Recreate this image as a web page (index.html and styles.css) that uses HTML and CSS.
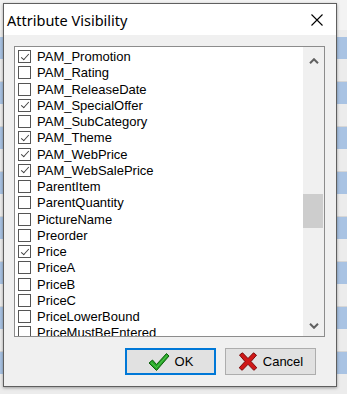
FILE: index.html
```html
<!DOCTYPE html>
<html>
<head>
  <title>Attribute Visibility</title>
  <link rel="stylesheet" href="styles.css">
</head>
<body>
  <div class="dialog">
    <div class="titlebar">
      <span class="title">Attribute Visibility</span>
      <svg class="close" width="12" height="12" viewBox="0 0 12 12">
        <path d="M0.5 0.5 L11.5 11.5 M11.5 0.5 L0.5 11.5" stroke="#000" stroke-width="1.1" fill="none"/>
      </svg>
    </div>
    <div class="content">
      <div class="listbox">
        <div class="items">
          <div class="scroller">
            <div class="item"><span class="box"></span></div>
            <div class="item"><span class="box checked"></span>PAM_Promotion</div>
            <div class="item"><span class="box"></span>PAM_Rating</div>
            <div class="item"><span class="box"></span>PAM_ReleaseDate</div>
            <div class="item"><span class="box checked"></span>PAM_SpecialOffer</div>
            <div class="item"><span class="box"></span>PAM_SubCategory</div>
            <div class="item"><span class="box checked"></span>PAM_Theme</div>
            <div class="item"><span class="box checked"></span>PAM_WebPrice</div>
            <div class="item"><span class="box checked"></span>PAM_WebSalePrice</div>
            <div class="item"><span class="box"></span>ParentItem</div>
            <div class="item"><span class="box"></span>ParentQuantity</div>
            <div class="item"><span class="box"></span>PictureName</div>
            <div class="item"><span class="box"></span>Preorder</div>
            <div class="item"><span class="box checked"></span>Price</div>
            <div class="item"><span class="box"></span>PriceA</div>
            <div class="item"><span class="box"></span>PriceB</div>
            <div class="item"><span class="box"></span>PriceC</div>
            <div class="item"><span class="box"></span>PriceLowerBound</div>
            <div class="item"><span class="box"></span>PriceMustBeEntered</div>
          </div>
        </div>
        <div class="scrollbar">
          <div class="arrow up">
            <svg width="10" height="6" viewBox="0 0 10 6"><path d="M1 5.2 L5 1.2 L9 5.2" stroke="#606060" stroke-width="2" fill="none"/></svg>
          </div>
          <div class="track"><div class="thumb"></div></div>
          <div class="arrow down">
            <svg width="10" height="6" viewBox="0 0 10 6"><path d="M1 0.8 L5 4.8 L9 0.8" stroke="#606060" stroke-width="2" fill="none"/></svg>
          </div>
        </div>
      </div>

      <div class="buttons">
        <button class="btn default">
          <svg width="22" height="20" viewBox="0 0 22 20">
            <path d="M1 11 L4.5 8 L8.5 12.5 L18.5 1.5 L21 4 L8.5 18.5 Z" fill="#26a626" stroke="#0b5e0b" stroke-width="1" stroke-linejoin="round"/>
            <path d="M3 10.5 L8.5 15.5 L19 3.5" stroke="#6fdc6f" stroke-width="1" fill="none" opacity="0.6"/>
          </svg>
          <span>OK</span>
        </button>
        <button class="btn">
          <svg width="20" height="19" viewBox="0 0 20 19">
            <path d="M1.5 3 L4.5 0.8 L10 6.5 L15.5 0.8 L18.5 3.2 L13 9.5 L18.8 15.8 L15.8 18.3 L10 12.3 L4.2 18.3 L1.2 15.8 L7 9.5 Z" fill="#d01818" stroke="#7a0a0a" stroke-width="1" stroke-linejoin="round"/>
          </svg>
          <span>Cancel</span>
        </button>
      </div>
    </div>
  </div>
</body>
</html>
```

FILE: styles.css
```css
/* window behind the dialog */
html, body {
  margin: 0;
  padding: 0;
}

body {
  width: 347px;
  height: 394px;
  overflow: hidden;
  background:
    linear-gradient(#f3f3f3, #f3f3f3) 0 0 / 100% 30px no-repeat,
    repeating-linear-gradient(#a9c3e3 0 22px, #ececec 22px 44px, #d6d6d6 44px 45px) 0 37px;
  font-family: "Liberation Sans", Arial, sans-serif;
}

.dialog {
  margin: 3px 0 0 3px;
  width: 334px;
  height: 384px;
  box-sizing: border-box;
  border: 1px solid #5f5f5f;
  background: #f0f0f0;
  box-shadow: 0 1px 3px rgba(0, 0, 0, 0.35);
}

.titlebar {
  height: 31px;
  background: #fff;
  display: flex;
  align-items: center;
  justify-content: space-between;
  padding: 0 13px 0 3px;
}

.title {
  font-family: "Segoe UI", "Noto Sans", sans-serif;
  font-size: 14.5px;
  color: #000;
}

.content {
  padding: 11px 11px 0 10px;
}

.listbox {
  display: flex;
  height: 291px;
  box-sizing: border-box;
  border: 1px solid #8c8c8c;
  background: #fff;
}

.items {
  flex: 1;
  overflow: hidden;
}

.scroller {
  margin-top: -14.65px;
}

.item {
  display: flex;
  align-items: center;
  height: 16.25px;
  padding-left: 3px;
  font-size: 13px;
  color: #000;
  white-space: nowrap;
}

.box {
  position: relative;
  width: 13px;
  height: 13px;
  box-sizing: border-box;
  border: 1px solid #555;
  background: #fff;
  margin-right: 6px;
  flex: none;
}

.box.checked::after {
  content: "";
  position: absolute;
  left: 3.5px;
  top: 0.5px;
  width: 3px;
  height: 7px;
  border-right: 1.4px solid #404040;
  border-bottom: 1.4px solid #404040;
  transform: rotate(42deg);
}

.scrollbar {
  width: 21px;
  background: #f0f0f0;
  display: flex;
  flex-direction: column;
}

.arrow {
  display: flex;
  align-items: center;
  justify-content: center;
}

.arrow.up {
  height: 28px;
}

.arrow.down {
  height: 21px;
}

.track {
  flex: 1;
}

.thumb {
  margin: 119px 1px 0 0;
  height: 34px;
  background: #cdcdcd;
}

.buttons {
  display: flex;
  justify-content: flex-end;
  gap: 9px;
  margin-top: 11px;
  padding-right: 9px;
}

.btn {
  width: 91px;
  height: 27px;
  box-sizing: border-box;
  border: 1px solid #adadad;
  background: #e1e1e1;
  display: flex;
  align-items: center;
  justify-content: center;
  gap: 5px;
  padding: 0;
  font-family: "Liberation Sans", Arial, sans-serif;
  font-size: 13px;
  color: #000;
}

.btn.default {
  border-color: #0078d7;
  box-shadow: inset 0 0 0 1px #0078d7;
}
```
